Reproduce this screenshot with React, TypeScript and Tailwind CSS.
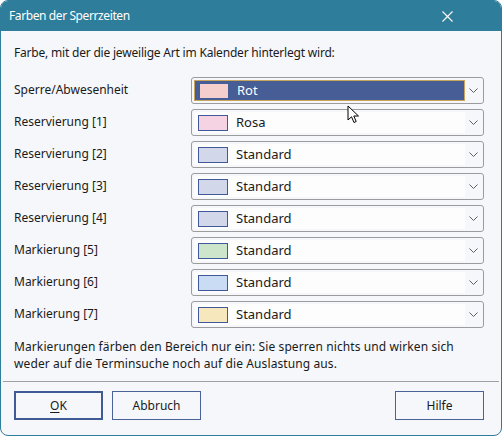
import { useState } from 'react'

type Row = { label: string; color: string; value: string }

const rows: Row[] = [
  { label: 'Sperre/Abwesenheit', color: '#f5cece', value: 'Rot' },
  { label: 'Reservierung [1]', color: '#f5d3e2', value: 'Rosa' },
  { label: 'Reservierung [2]', color: '#d2d7e9', value: 'Standard' },
  { label: 'Reservierung [3]', color: '#d2d7e9', value: 'Standard' },
  { label: 'Reservierung [4]', color: '#d2d7e9', value: 'Standard' },
  { label: 'Markierung [5]', color: '#cce5cb', value: 'Standard' },
  { label: 'Markierung [6]', color: '#c9dcf3', value: 'Standard' },
  { label: 'Markierung [7]', color: '#f6e7bd', value: 'Standard' },
]

const font = { fontFamily: '"Noto Sans", "Open Sans", Arial, sans-serif' }

function Chevron() {
  return (
    <svg width="9" height="5" viewBox="0 0 9 5" className="text-[#606060]">
      <path d="M0.5 0.5 L4.5 4.5 L8.5 0.5" fill="none" stroke="currentColor" strokeWidth="1" />
    </svg>
  )
}

function ColorSelect({ row, selected }: { row: Row; selected: boolean }) {
  return (
    <div className="flex h-[27px] items-stretch rounded-[3px] border border-[#9c9c9c] bg-[#f6f7fa] p-[2px]">
      <div
        className={`flex flex-1 items-center pl-[4px] ${
          selected ? 'border border-[#c9a45c] bg-[#475d96] text-white' : 'bg-[#fdfdfe] text-[#1a1a1a]'
        }`}
      >
        <span
          className={`h-[16px] w-[30px] shrink-0 border ${selected ? 'border-[#475d96]' : 'border-[#40599a]'}`}
          style={{ backgroundColor: row.color }}
        />
        <span className="ml-[8px] text-[13px] leading-none">{row.value}</span>
      </div>
      <div className="flex w-[16px] items-center justify-center pl-[1px]">
        <Chevron />
      </div>
    </div>
  )
}

export default function App() {
  const [active] = useState(0)

  return (
    <div className="h-[436px] w-[502px] bg-white" style={font}>
      <div className="relative flex h-full flex-col overflow-hidden rounded-[8px] border border-[#2e7d9a] bg-[#f5f7fb] text-[#1a1a1a]">
        {/* Title bar */}
        <div className="flex h-[30px] shrink-0 items-center justify-between bg-[#2e7d9a] pl-[8px]">
          <span className="text-[12px] tracking-[-0.4px] text-white">Farben der Sperrzeiten</span>
          <div className="mr-[31px] flex h-full w-[46px] items-center justify-center">
            <svg width="11" height="11" viewBox="0 0 11 11">
              <path d="M0.5 0.5 L10.5 10.5 M10.5 0.5 L0.5 10.5" stroke="white" strokeWidth="1.1" />
            </svg>
          </div>
        </div>

        {/* Content */}
        <div className="flex flex-col pl-[13px] pr-[17px] pt-[14px]">
          <p className="h-[16px] text-[12px] leading-[16px] tracking-[-0.2px]">
            Farbe, mit der die jeweilige Art im Kalender hinterlegt wird:
          </p>

          <div className="mt-[16px] flex flex-col gap-[5px]">
            {rows.map((row, i) => (
              <div key={row.label} className="grid grid-cols-[177px_1fr] items-center">
                <span className="-mt-[2px] text-[12px] leading-none">{row.label}</span>
                <ColorSelect row={row} selected={i === active} />
              </div>
            ))}
          </div>

          <p className="mt-[10px] text-[12px] leading-[17px] tracking-[0.1px]">
            Markierungen färben den Bereich nur ein: Sie sperren nichts und wirken sich
            <br />
            weder auf die Terminsuche noch auf die Auslastung aus.
          </p>
        </div>

        {/* Separator */}
        <div className="mx-[2px] mt-[9px] border-t border-[#a0a0a0]" />

        {/* Buttons */}
        <div className="flex items-center pl-[13px] pr-[17px] pt-[9px]">
          <button className="h-[29px] w-[89px] border-2 border-[#3f5a95] bg-[#f5f7fb] text-[12px]">
            <span className="underline underline-offset-2">O</span>K
          </button>
          <button className="ml-[9px] h-[29px] w-[89px] border border-[#4a6298] bg-[#f5f7fb] text-[12px]">
            Abbruch
          </button>
          <button className="ml-auto h-[29px] w-[89px] border border-[#4a6298] bg-[#f5f7fb] text-[12px]">
            Hilfe
          </button>
        </div>

        {/* Mouse pointer */}
        <svg
          className="absolute left-[346px] top-[104px]"
          width="14"
          height="20"
          viewBox="0 0 14 20"
        >
          <path
            d="M1 1 L1 15 L4.5 11.8 L7 17.5 L9.2 16.5 L6.8 11 L11.5 11 Z"
            fill="white"
            stroke="black"
            strokeWidth="1"
            strokeLinejoin="round"
          />
        </svg>
      </div>
    </div>
  )
}
